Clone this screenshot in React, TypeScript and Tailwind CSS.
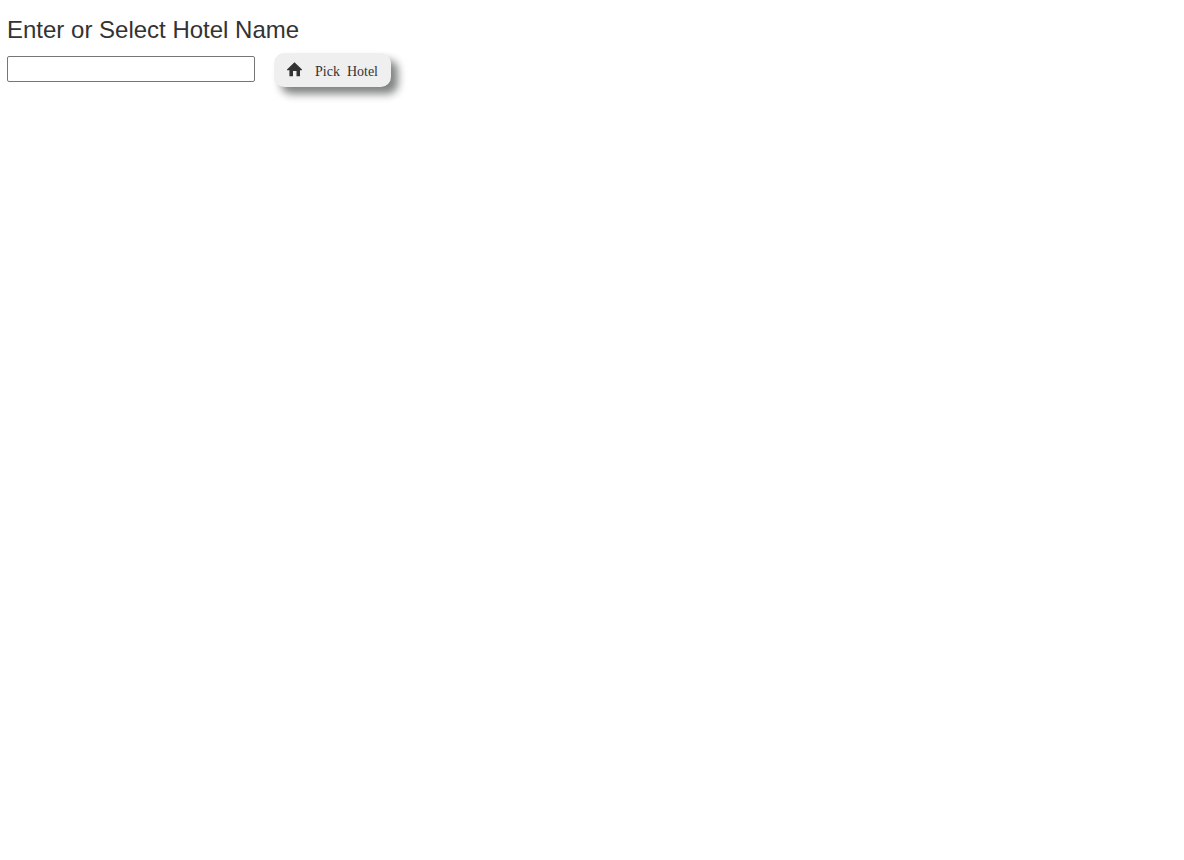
import type {ChangeEvent, JSX} from 'react';
import {useCallback, useState} from 'react';

const HomeIcon = (): JSX.Element => (
	<svg viewBox="0 0 14 14" className="size-[14px] overflow-visible fill-current" aria-hidden="true">
		<path d="M7.5 -0.8L15 6.4V7.2H13V13.3H9.5V8H6V13.3H2.4V7.2H0V6.4Z"/>
	</svg>
);

const App = (): JSX.Element => {
	const [hotelName, setHotelName] = useState('');

	const handleInputChange = useCallback((event: ChangeEvent<HTMLInputElement>) => {
		setHotelName(event.target.value);
	}, []);

	return (
		<main className="bg-white px-[7px] pt-4 pb-8 text-[#333333]">
			<label htmlFor="hotel" className="block font-['Liberation_Sans',Arial,sans-serif] text-2xl leading-7">
				Enter or Select Hotel Name
			</label>
			<div className="mt-[9px] flex flex-wrap items-center gap-[19px]">
				<input
					id="hotel"
					type="text"
					className="mb-0.5 h-[26px] w-[248px] rounded-xs border border-[#767676] bg-white px-1 font-['Liberation_Sans',Arial,sans-serif] text-sm"
					value={hotelName}
					onChange={handleInputChange}
				/>
				<button
					type="button"
					className="flex h-[34px] items-center gap-[14px] rounded-[10px] bg-[#efefef] px-[13px] font-['Liberation_Serif','Times_New_Roman',serif] text-sm whitespace-pre shadow-[7px_7px_8px_#808383]"
				>
					<HomeIcon/>
					<span className="pt-1">{'Pick\u00A0 Hotel'}</span>
				</button>
			</div>
		</main>
	);
};

export default App;
